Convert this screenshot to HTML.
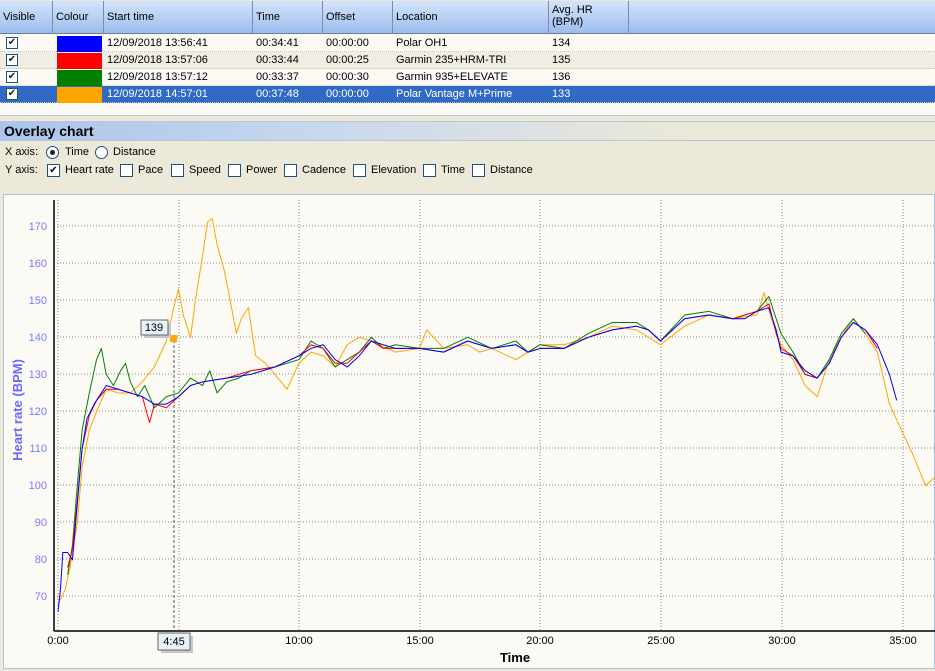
<!DOCTYPE html>
<html><head><meta charset="utf-8"><style>
*{margin:0;padding:0;box-sizing:border-box}
body{width:935px;height:671px;overflow:hidden;background:#ece9d8;font-family:"Liberation Sans",sans-serif;font-size:11px;color:#000;position:relative}
.abs{position:absolute}
#tbl{left:0;top:1px;width:935px;height:115px;background:#fbfaf5;border-bottom:1px solid #b8c8dc}
#hdr{left:0;top:0;width:935px;height:33px;background:linear-gradient(#d3e3fb,#b9d1f5 50%,#9dbdee);border-bottom:1px solid #6a7d99}
.hc{position:absolute;top:0;height:33px;border-left:1px solid #7b8ca8;padding-left:3px;line-height:33px}
.row{position:absolute;left:0;width:935px;height:17px;line-height:17px;border-bottom:1px dotted #c8c6bc}
.row span{position:absolute;top:0}
.cb{position:absolute;left:6px;top:2px;width:12px;height:12px;border:1px solid #1c5180;background:#fff;font-size:10px;line-height:10px;text-align:center;color:#222}
.sw{position:absolute;left:57px;top:1px;width:45px;height:16px}
.oc{left:0;top:121px;width:935px;height:20px;background:linear-gradient(90deg,#a9c4ea,#c9d8ee 35%,#ece9d8 75%);border-top:1px solid #b8c8dc;border-bottom:1px solid #b8c8dc;font-weight:bold;font-size:14px;line-height:19px;padding-left:4px}
.b{position:absolute;top:164px;width:13px;height:13px;border:1px solid #1c5180;background:#fff;font-size:10px;line-height:11px;text-align:center}
.l{position:absolute;top:164px}
.rad{position:absolute;top:146px;width:13px;height:13px;border:1px solid #1c5180;border-radius:50%;background:#fff}
#chart{left:3px;top:194px;width:932px;height:475px;background:#fbfaf5;border:1px solid #aac0dc}
</style></head><body>
<div id="tbl" class="abs">
<div id="hdr" class="abs">
<div class="hc" style="left:0;border-left:none">Visible</div>
<div class="hc" style="left:52px">Colour</div>
<div class="hc" style="left:103px">Start time</div>
<div class="hc" style="left:252px">Time</div>
<div class="hc" style="left:322px">Offset</div>
<div class="hc" style="left:392px">Location</div>
<div class="hc" style="left:548px;line-height:12px;padding-top:3px">Avg. HR<br>(BPM)</div>
<div class="hc" style="left:628px"></div>
</div>
<div class="row" style="top:34px"><div class="cb">✔</div><div class="sw" style="background:#0000ff"></div><span style="left:107px">12/09/2018 13:56:41</span><span style="left:256px">00:34:41</span><span style="left:326px">00:00:00</span><span style="left:396px">Polar OH1</span><span style="left:552px">134</span></div>
<div class="row" style="top:51px;background:#f0eee2"><div class="cb">✔</div><div class="sw" style="background:#ff0000"></div><span style="left:107px">12/09/2018 13:57:06</span><span style="left:256px">00:33:44</span><span style="left:326px">00:00:25</span><span style="left:396px">Garmin 235+HRM-TRI</span><span style="left:552px">135</span></div>
<div class="row" style="top:68px"><div class="cb">✔</div><div class="sw" style="background:#008000"></div><span style="left:107px">12/09/2018 13:57:12</span><span style="left:256px">00:33:37</span><span style="left:326px">00:00:30</span><span style="left:396px">Garmin 935+ELEVATE</span><span style="left:552px">136</span></div>
<div class="row" style="top:85px;background:#316ac5;color:#fff"><div class="cb">✔</div><div class="sw" style="background:#ffa500"></div><span style="left:107px">12/09/2018 14:57:01</span><span style="left:256px">00:37:48</span><span style="left:326px">00:00:00</span><span style="left:396px">Polar Vantage M+Prime</span><span style="left:552px">133</span></div>
</div>
<div class="abs oc">Overlay chart</div>
<div class="abs" style="left:5px;top:146px">X axis:</div>
<div class="rad" style="left:46px"><span style="position:absolute;left:3px;top:3px;width:5px;height:5px;border-radius:50%;background:#222"></span></div>
<div class="abs" style="left:65px;top:146px">Time</div>
<div class="rad" style="left:95px"></div>
<div class="abs" style="left:113px;top:146px">Distance</div>
<div class="l" style="left:5px">Y axis:</div>
<div class="b" style="left:47px">✔</div><div class="l" style="left:65px">Heart rate</div>
<div class="b" style="left:120px"></div><div class="l" style="left:138px">Pace</div>
<div class="b" style="left:171px"></div><div class="l" style="left:189px">Speed</div>
<div class="b" style="left:228px"></div><div class="l" style="left:246px">Power</div>
<div class="b" style="left:284px"></div><div class="l" style="left:302px">Cadence</div>
<div class="b" style="left:353px"></div><div class="l" style="left:371px">Elevation</div>
<div class="b" style="left:423px"></div><div class="l" style="left:441px">Time</div>
<div class="b" style="left:472px"></div><div class="l" style="left:490px">Distance</div>
<div id="chart" class="abs"></div>
<svg class="abs" style="left:0;top:0" width="935" height="671" font-family="Liberation Sans, sans-serif">
<g stroke="#888" stroke-dasharray="1,2" stroke-width="1">
<line x1="58" y1="200" x2="58" y2="631"/><line x1="179" y1="200" x2="179" y2="631"/><line x1="299" y1="200" x2="299" y2="631"/><line x1="420" y1="200" x2="420" y2="631"/><line x1="540" y1="200" x2="540" y2="631"/><line x1="661" y1="200" x2="661" y2="631"/><line x1="782" y1="200" x2="782" y2="631"/><line x1="903" y1="200" x2="903" y2="631"/>
<line x1="54" y1="226" x2="935" y2="226"/><line x1="54" y1="263" x2="935" y2="263"/><line x1="54" y1="300" x2="935" y2="300"/><line x1="54" y1="337" x2="935" y2="337"/><line x1="54" y1="374" x2="935" y2="374"/><line x1="54" y1="411" x2="935" y2="411"/><line x1="54" y1="448" x2="935" y2="448"/><line x1="54" y1="485" x2="935" y2="485"/><line x1="54" y1="522" x2="935" y2="522"/><line x1="54" y1="559" x2="935" y2="559"/><line x1="54" y1="596" x2="935" y2="596"/>
</g>
<line x1="174" y1="340" x2="174" y2="631" stroke="#555" stroke-dasharray="3,2"/>
<g stroke="#000" stroke-width="1.5"><line x1="54" y1="200" x2="54" y2="631"/><line x1="54" y1="631" x2="935" y2="631"/></g>
<g fill="#7b7bff" font-size="11" text-anchor="end">
<text x="47" y="230">170</text><text x="47" y="267">160</text><text x="47" y="304">150</text><text x="47" y="341">140</text><text x="47" y="378">130</text><text x="47" y="415">120</text><text x="47" y="452">110</text><text x="47" y="489">100</text><text x="47" y="526">90</text><text x="47" y="563">80</text><text x="47" y="600">70</text>
</g>
<g font-size="11" text-anchor="middle" fill="#000"><text x="58" y="644">0:00</text><text x="299" y="644">10:00</text><text x="420" y="644">15:00</text><text x="540" y="644">20:00</text><text x="661" y="644">25:00</text><text x="782" y="644">30:00</text><text x="903" y="644">35:00</text></g>
<text x="515" y="662" font-size="13" font-weight="bold" text-anchor="middle">Time</text>
<text transform="translate(22,410) rotate(-90)" font-size="13" font-weight="bold" fill="#6a6aff" text-anchor="middle">Heart rate (BPM)</text>
<g transform="matrix(24.1 0 0 -3.71 58 856.7)" fill="none" stroke-width="1" stroke-linejoin="round">
<polyline vector-effect="non-scaling-stroke" stroke="#ffa500" points="0,68 0.3,72 0.5,78 0.8,90 1,105 1.3,115 1.6,120 2,126 2.5,125 3,125 3.5,128 4,132 4.5,139 4.8,148 5,153 5.2,146 5.5,140 5.7,150 6,162 6.2,171 6.4,172 6.6,165 6.9,158 7.2,148 7.4,141 7.6,145 7.9,148 8.2,135 8.6,133 9,130 9.5,126 10,133 10.5,136 11,135 11.5,132 12,138 12.5,140 13,139 14,136 15,137 15.3,142 16,137 17,138 17.5,136 18,137 19,134 20,138 21,138 22,140 23,143 24,142 25,138 26,143 27,146 28,145 29,146 29.3,152 29.6,145 30,138 30.5,134 31,127 31.5,124 32,134 32.5,140 33,145 33.5,141 34,136 34.5,122 35,115 35.5,108 36,100 36.5,103 37,95 37.5,90 37.8,96"/>
<polyline vector-effect="non-scaling-stroke" stroke="#008000" points="0.4,76 0.6,84 0.8,100 1,115 1.3,125 1.6,134 1.8,137 2,130 2.3,127 2.6,131 2.8,133 3,128 3.3,124 3.6,127 4,121 4.5,124 5,125 5.5,129 6,127 6.3,131 6.6,125 7,128 7.5,129 8,131 9,132 10,134 10.5,139 11,137 11.5,132 12,134 12.5,136 13,140 13.5,137 14,138 15,137 16,137 17,140 18,137 19,139 19.5,136 20,138 21,137 22,141 23,144 24,144 24.5,142 25,139 26,146 27,147 28,145 29,147 29.5,151 30,141 30.5,136 31,130 31.5,129 32,134 32.5,141 33,145 33.5,141"/>
<polyline vector-effect="non-scaling-stroke" stroke="#ff0000" points="0.4,78 0.6,83 0.8,96 1,110 1.3,119 1.6,123 2,126 2.5,126 3,125 3.5,124 3.8,117 4,122 4.5,121 5,124 5.5,127 6,128 7,129 8,131 9,132 10,135 10.5,138 11,137 11.5,133 12,133 12.5,136 13,139 13.5,137 14,137 15,137 16,136 17,139 18,137 19,138 19.5,136 20,137 21,137 22,140 23,142 24,143 24.5,142 25,139 26,145 27,146 28,145 29,147 29.5,149 29.8,141 30,137 30.5,135 31,130 31.5,129 32,133 32.5,140 33,144 33.5,142 34,137"/>
<polyline vector-effect="non-scaling-stroke" stroke="#0000ff" points="0,66 0.1,72 0.2,82 0.4,82 0.6,80 0.8,95 1,110 1.2,118 1.5,122 1.8,125 2,127 2.5,126 3,125 3.5,124 4,122 4.5,122 5,124 5.5,127 6,128 7,129 8,130 9,132 10,135 10.5,137 11,138 11.5,134 12,132 12.5,135 13,139 13.5,138 14,137 15,137 16,136 17,139 17.5,138 18,137 19,138 19.5,136 20,137 21,137 22,140 23,142 24,143 24.5,142 25,139 26,145 27,146 28,145 28.5,145 29,147 29.5,148 29.8,142 30,136 30.5,135 31,131 31.5,129 32,133 32.5,140 33,144 33.5,142 34,138 34.5,130 34.8,123"/>
</g>
<rect x="170" y="335" width="7" height="7" fill="#ffa500"/>
<rect x="144" y="323" width="27" height="15" fill="#c8c8c8"/>
<rect x="141" y="320" width="27" height="15" fill="#e8f0f8" stroke="#666"/>
<text x="154" y="331" font-size="11" text-anchor="middle">139</text>
<rect x="161" y="636" width="32" height="17" fill="#c8c8c8"/>
<rect x="158" y="633" width="32" height="17" fill="#e8f0f8" stroke="#666"/>
<text x="174" y="645" font-size="11" text-anchor="middle">4:45</text>
</svg>
</body></html>
